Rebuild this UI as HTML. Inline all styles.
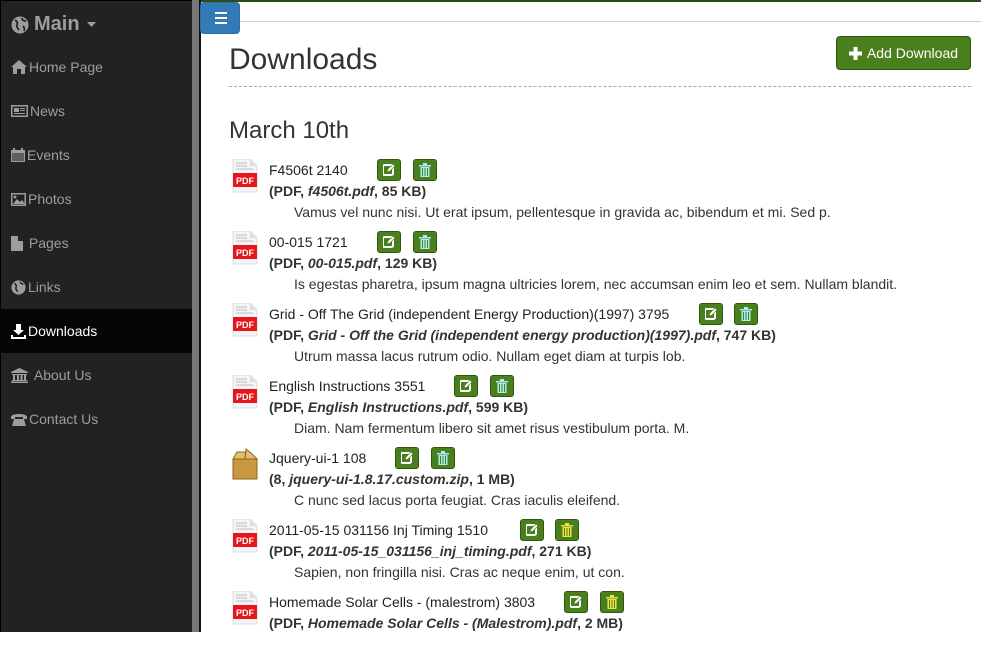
<!DOCTYPE html>
<html><head><meta charset="utf-8">
<style>
*{box-sizing:border-box;margin:0;padding:0}
body{width:981px;height:632px;overflow:hidden;font-family:"Liberation Sans",sans-serif;background:#fff;position:relative;color:#333}
#side{position:absolute;left:0;top:0;width:192px;height:632px;background:#222;border-left:1px solid #000;border-top:1px solid #000}
#sb{position:absolute;left:192px;top:0;width:7px;height:632px;background:#777}
#sl{position:absolute;left:199px;top:0;width:2px;height:632px;background:#111}
.brand{position:absolute;left:10px;top:12px;color:#9d9d9d;font-size:20px;font-weight:bold;display:flex;align-items:center;gap:5px}
.nav{position:absolute;left:0;width:192px;height:44px;color:#9d9d9d;font-size:14px;display:flex;align-items:center;padding-left:11px;gap:2px}
.nav.act{background:#050505;color:#fff}
.nav svg{fill:currentColor}
#top{position:absolute;left:201px;top:0;right:0;height:2px;background:#274e13}
#hl{position:absolute;left:240px;top:21px;right:0;height:1px;background:#ccc}
#tog{position:absolute;left:200px;top:2px;width:40px;height:32px;background:#337ab7;border:1px solid #2e6da4;border-radius:4px}
#tog i{position:absolute;left:14px;width:12px;height:2px;background:#fff}
h1{position:absolute;left:229px;top:43px;font-size:30px;font-weight:normal;color:#333}
#dash{position:absolute;left:229px;top:86px;width:742px;border-top:1px dashed #aaa}
#add{position:absolute;left:836px;top:36px;width:135px;height:34px;background:#4a7f1e;border:1px solid #2f5710;border-radius:4px;color:#fff;font-size:14px;display:flex;align-items:center;justify-content:center;gap:5px}
h2{position:absolute;left:229px;top:117px;font-size:24px;font-weight:normal;color:#333}
.e{position:absolute;left:229px;width:750px;height:72px;font-size:14px}
.e .ic{position:absolute;left:3px;top:0}
.e .t{position:absolute;left:40px;top:3px;white-space:nowrap;color:#222}
.e .d{position:absolute;left:40px;top:24px;font-weight:bold;white-space:nowrap;color:#333}
.e .s{position:absolute;left:65px;top:45px;white-space:nowrap;color:#333}
.b{position:absolute;top:0;width:24px;height:22px;background:#4a7f1e;border:1px solid #2f5710;border-radius:3px;display:flex;align-items:center;justify-content:center}
</style></head><body>
<div id="side">
<div class="brand"><svg width="18" height="18" viewBox="0 0 18 18"><circle cx="9" cy="9" r="8.5" fill="#9d9d9d"/><path d="M4 4c2 1 3 3 2 5s1 3 2 5M11 2c0 2 2 3 4 3M12 10c1 1 2 3 1 5" stroke="#222" stroke-width="1.8" fill="none"/></svg>Main <svg width="9" height="5" viewBox="0 0 9 5" style="margin-left:2px"><path d="M0 0h9L4.5 5z" fill="#9d9d9d"/></svg></div>
</div>
<div class="nav" style="top:45px"><svg width="16" height="14" viewBox="0 0 16 14"><path d="M8 0L0 7h2v7h4V9h4v5h4V7h2z"/></svg>Home Page</div>
<div class="nav" style="top:89px"><svg width="17" height="12" viewBox="0 0 17 12"><path d="M0 0h17v12H0zM1.5 1.5v9h14v-9zM3 3h5v4H3zM9 3h5v1H9zM9 5h5v1H9zM3 8h11v1H3z" fill-rule="evenodd"/></svg>News</div>
<div class="nav" style="top:133px"><svg width="14" height="14" viewBox="0 0 14 14"><path d="M0 2h14v12H0zM2 0h2v3H2zM10 0h2v3h-2z"/><path d="M1 5h12v8H1z" fill="#222" opacity=".5"/></svg>Events</div>
<div class="nav" style="top:177px"><svg width="15" height="13" viewBox="0 0 15 13"><path d="M0 0h15v13H0zM1.5 1.5v10h12v-10z" fill-rule="evenodd"/><path d="M2 11l4-5 3 3 2-2 3 4z"/><circle cx="4" cy="4" r="1.5"/></svg>Photos</div>
<div class="nav" style="top:221px"><svg width="12" height="15" viewBox="0 0 12 15"><path d="M0 0h7l5 5v10H0zM7 0v5h5"/></svg>&nbsp;Pages</div>
<div class="nav" style="top:265px"><svg width="15" height="15" viewBox="0 0 18 18"><circle cx="9" cy="9" r="8.5"/><path d="M4 4c2 1 3 3 2 5s1 3 2 5M11 2c0 2 2 3 4 3" stroke="#222" stroke-width="1.8" fill="none"/></svg>Links</div>
<div class="nav act" style="top:309px"><svg width="15" height="15" viewBox="0 0 15 15"><path d="M5 0h5v6h3l-5.5 5L2 6h3zM0 11h2v2h11v-2h2v4H0z"/></svg>Downloads</div>
<div class="nav" style="top:353px"><svg width="17" height="15" viewBox="0 0 17 15"><path d="M8.5 0L17 4v1H0V4zM1 6h15v1H1zM2 7h2v5H2zM6 7h2v5H6zM9.5 7h2v5h-2zM13 7h2v5h-2zM1 12h15v1H1zM0 13.5h17V15H0z"/></svg>&nbsp;About Us</div>
<div class="nav" style="top:397px"><svg width="16" height="14" viewBox="0 0 16 14"><path d="M0 5C0 1 16 1 16 5v2h-4V5H4v2H0zM3 7h10l2 7H1z"/></svg>Contact Us</div>
<div id="sb"></div><div id="sl"></div>
<div id="top"></div><div id="hl"></div>
<div id="tog"><i style="top:9px"></i><i style="top:14px"></i><i style="top:19px"></i></div>
<h1>Downloads</h1>
<div id="add"><svg width="13" height="13" viewBox="0 0 13 13"><path d="M4.5 0h4v4.5H13v4H8.5V13h-4V8.5H0v-4h4.5z" fill="#fff"/></svg>Add Download</div>
<div id="dash"></div>
<h2>March 10th</h2>

<svg width="0" height="0" style="position:absolute"><defs>
<g id="pdf"><path d="M1 0h17l7 7v26H1z" fill="#f4f4f4" stroke="#ddd"/><path d="M18 0v7h7" fill="#ddd"/><path d="M4 4h11M4 7h11M4 10h17" stroke="#bbb"/><rect x="1" y="14" width="24" height="14" fill="#e8141b"/><text x="13" y="25" font-family="Liberation Sans" font-size="9" font-weight="bold" fill="#fff" text-anchor="middle">PDF</text></g>
<g id="zip"><path d="M1 12h24v20H1z" fill="#c9973f" stroke="#8d6422"/><path d="M1 12l4-7h9l-1 7zM13 12l1-10 5 4 6 6z" fill="#e5bd70" stroke="#8d6422"/></g>
<g id="ed"><rect x="0" y="1" width="10" height="10" rx="1.5" fill="none" stroke="#fff" stroke-width="2"/><path d="M4 8l1-3 5-5 2 2-5 5z" fill="#fff" stroke="#4a7f1e" stroke-width=".6"/></g>
</defs></svg>

<div class="e" style="top:159px"><svg class="ic" width="27" height="34"><use href="#pdf"/></svg><div class="t">F4506t 2140</div><div class="b" style="left:148px"><svg width="12" height="12"><use href="#ed"/></svg></div><div class="b" style="left:184px"><svg width="12" height="14" viewBox="0 0 12 14"><path d="M0 2h12v1.5H0zM4 0h4v2H4zM1.5 4h9v10h-9z" fill="#a8ecf5"/><path d="M3.5 5v8M6 5v8M8.5 5v8" stroke="#4a7f1e"/></svg></div><div class="d">(PDF, <i>f4506t.pdf</i>, 85 KB)</div><div class="s">Vamus vel nunc nisi. Ut erat ipsum, pellentesque in gravida ac, bibendum et mi. Sed p.</div></div>

<div class="e" style="top:231px"><svg class="ic" width="27" height="34"><use href="#pdf"/></svg><div class="t">00-015 1721</div><div class="b" style="left:148px"><svg width="12" height="12"><use href="#ed"/></svg></div><div class="b" style="left:184px"><svg width="12" height="14" viewBox="0 0 12 14"><path d="M0 2h12v1.5H0zM4 0h4v2H4zM1.5 4h9v10h-9z" fill="#a8ecf5"/><path d="M3.5 5v8M6 5v8M8.5 5v8" stroke="#4a7f1e"/></svg></div><div class="d">(PDF, <i>00-015.pdf</i>, 129 KB)</div><div class="s">Is egestas pharetra, ipsum magna ultricies lorem, nec accumsan enim leo et sem. Nullam blandit.</div></div>

<div class="e" style="top:303px"><svg class="ic" width="27" height="34"><use href="#pdf"/></svg><div class="t">Grid - Off The Grid (independent Energy Production)(1997) 3795</div><div class="b" style="left:470px"><svg width="12" height="12"><use href="#ed"/></svg></div><div class="b" style="left:505px"><svg width="12" height="14" viewBox="0 0 12 14"><path d="M0 2h12v1.5H0zM4 0h4v2H4zM1.5 4h9v10h-9z" fill="#a8ecf5"/><path d="M3.5 5v8M6 5v8M8.5 5v8" stroke="#4a7f1e"/></svg></div><div class="d">(PDF, <i>Grid - Off the Grid (independent energy production)(1997).pdf</i>, 747 KB)</div><div class="s">Utrum massa lacus rutrum odio. Nullam eget diam at turpis lob.</div></div>

<div class="e" style="top:375px"><svg class="ic" width="27" height="34"><use href="#pdf"/></svg><div class="t">English Instructions 3551</div><div class="b" style="left:225px"><svg width="12" height="12"><use href="#ed"/></svg></div><div class="b" style="left:261px"><svg width="12" height="14" viewBox="0 0 12 14"><path d="M0 2h12v1.5H0zM4 0h4v2H4zM1.5 4h9v10h-9z" fill="#a8ecf5"/><path d="M3.5 5v8M6 5v8M8.5 5v8" stroke="#4a7f1e"/></svg></div><div class="d">(PDF, <i>English Instructions.pdf</i>, 599 KB)</div><div class="s">Diam. Nam fermentum libero sit amet risus vestibulum porta. M.</div></div>

<div class="e" style="top:447px"><svg class="ic" width="27" height="34"><use href="#zip"/></svg><div class="t">Jquery-ui-1 108</div><div class="b" style="left:166px"><svg width="12" height="12"><use href="#ed"/></svg></div><div class="b" style="left:202px"><svg width="12" height="14" viewBox="0 0 12 14"><path d="M0 2h12v1.5H0zM4 0h4v2H4zM1.5 4h9v10h-9z" fill="#a8ecf5"/><path d="M3.5 5v8M6 5v8M8.5 5v8" stroke="#4a7f1e"/></svg></div><div class="d">(8, <i>jquery-ui-1.8.17.custom.zip</i>, 1 MB)</div><div class="s">C nunc sed lacus porta feugiat. Cras iaculis eleifend.</div></div>

<div class="e" style="top:519px"><svg class="ic" width="27" height="34"><use href="#pdf"/></svg><div class="t">2011-05-15 031156 Inj Timing 1510</div><div class="b" style="left:291px"><svg width="12" height="12"><use href="#ed"/></svg></div><div class="b" style="left:326px"><svg width="12" height="14" viewBox="0 0 12 14"><path d="M0 2h12v1.5H0zM4 0h4v2H4zM1.5 4h9v10h-9z" fill="#f0e040"/><path d="M3.5 5v8M6 5v8M8.5 5v8" stroke="#4a7f1e"/></svg></div><div class="d">(PDF, <i>2011-05-15_031156_inj_timing.pdf</i>, 271 KB)</div><div class="s">Sapien, non fringilla nisi. Cras ac neque enim, ut con.</div></div>

<div class="e" style="top:591px"><svg class="ic" width="27" height="34"><use href="#pdf"/></svg><div class="t">Homemade Solar Cells - (malestrom) 3803</div><div class="b" style="left:335px"><svg width="12" height="12"><use href="#ed"/></svg></div><div class="b" style="left:371px"><svg width="12" height="14" viewBox="0 0 12 14"><path d="M0 2h12v1.5H0zM4 0h4v2H4zM1.5 4h9v10h-9z" fill="#f0e040"/><path d="M3.5 5v8M6 5v8M8.5 5v8" stroke="#4a7f1e"/></svg></div><div class="d">(PDF, <i>Homemade Solar Cells - (Malestrom).pdf</i>, 2 MB)</div></div>
</body></html>
